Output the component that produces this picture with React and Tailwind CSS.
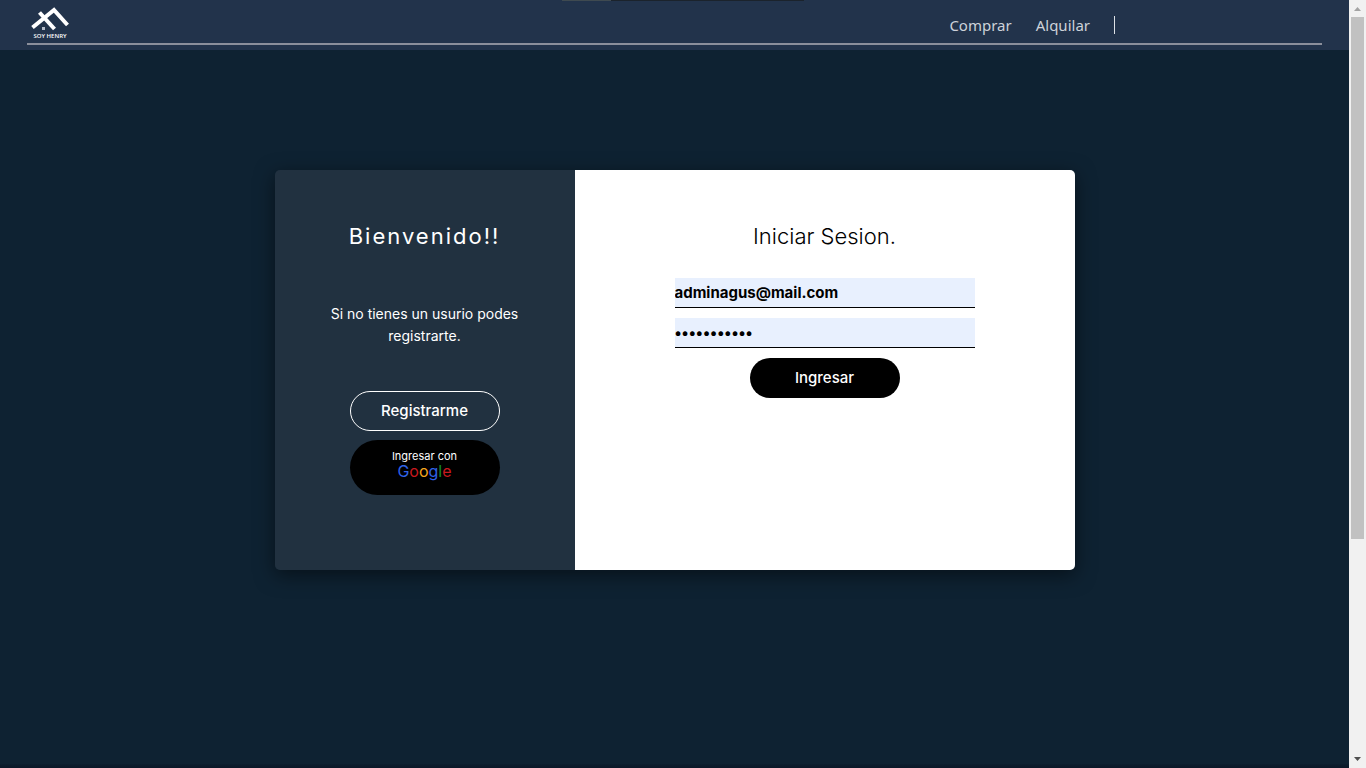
import React from "react";

function Logo() {
  return (
    <svg className="h-9 w-10" viewBox="0 0 40 36" role="img" aria-label="Soy Henry">
      <g fill="none" stroke="#fff" strokeWidth="4">
        <path d="M2.5 23.5 L24 6 L37.5 21" />
        <path d="M9.5 8.5 L24.5 25" />
      </g>
      <rect x="12" y="23" width="3" height="3" fill="#b4bcc9" />
      <text x="20" y="34" textAnchor="middle" fill="#fff" fontFamily="Open Sans, sans-serif" fontSize="6" fontWeight="600">
        SOY HENRY
      </text>
    </svg>
  );
}

function Header() {
  return (
    <header className="relative bg-[#22334b] px-[27px] pb-[5px]">
      <div className="absolute top-0 left-[562px] flex h-px w-[242px] bg-[#1b232c]">
        <span className="w-[49px] bg-[#3f4a50]" />
      </div>
      <div className="flex h-[45px] justify-between border-b-2 border-[#8b8f9b]">
        <a href="#inicio" className="ml-[3px] pt-1">
          <Logo />
        </a>
        <nav className="mr-[207px] flex items-center gap-6 pt-[7px] font-['Noto_Sans','Open_Sans',sans-serif] text-[15px] leading-6 text-[#cdd2d9]">
          <a href="#comprar">Comprar</a>
          <a href="#alquilar">Alquilar</a>
          <span className="h-[18px] w-px bg-[#dde1e6]" />
        </nav>
      </div>
    </header>
  );
}

function WelcomePanel() {
  return (
    <section className="flex w-[300px] shrink-0 flex-col items-center bg-[#213140] px-[45px] pt-[50px] text-center text-white">
      <h2 className="text-[22px] leading-[33px] tracking-[2px]">Bienvenido!!</h2>
      <p className="mt-[50px] text-[14px] leading-[22px]">Si no tienes un usurio podes registrarte.</p>
      <button type="button" className="mt-[44px] h-10 w-[150px] rounded-full border border-white text-[15px] font-medium">
        Registrarme
      </button>
      <button type="button" className="mt-[9px] flex h-[55px] w-[150px] flex-col items-center rounded-full bg-black pt-[9px]">
        <span className="text-[11px] leading-[14px]">Ingresar con</span>
        <span className="text-[16px] leading-4">
          <span className="text-[#2f62e8]">G</span>
          <span className="text-[#c8191e]">o</span>
          <span className="text-[#f5a61d]">o</span>
          <span className="text-[#2f62e8]">g</span>
          <span className="text-[#158a2b]">l</span>
          <span className="text-[#c8191e]">e</span>
        </span>
      </button>
    </section>
  );
}

function LoginForm() {
  const field =
    "h-[30px] w-full border-b border-black bg-[#e8f0fe] text-[15px] font-bold text-black outline-none";
  return (
    <form className="flex grow flex-col items-center bg-white pt-[50px]" onSubmit={(e) => e.preventDefault()}>
      <h1 className="text-[22px] leading-[33px] font-light text-black">Iniciar Sesion.</h1>
      <div className="mt-[25px] flex w-[300px] flex-col items-center gap-[10px]">
        <input type="email" aria-label="Email" defaultValue="adminagus@mail.com" className={field} />
        <input type="password" aria-label="Contraseña" defaultValue="adminagus12" className={field} />
        <button type="submit" className="h-10 w-[150px] rounded-full bg-black text-[15px] font-medium text-white">
          Ingresar
        </button>
      </div>
    </form>
  );
}

function ScrollBar() {
  return (
    <div className="flex w-[17px] shrink-0 flex-col items-center bg-[#f1f1f1]" aria-hidden="true">
      <svg className="h-[17px] w-[17px]" viewBox="0 0 17 17">
        <path d="M5 11 L8.5 7 L12 11 Z" fill="#a3a3a3" />
      </svg>
      <div className="h-[522px] w-[13px] bg-[#c1c1c1]" />
      <svg className="mt-auto h-[17px] w-[17px]" viewBox="0 0 17 17">
        <path d="M5 6 L12 6 L8.5 10 Z" fill="#505050" />
      </svg>
    </div>
  );
}

export default function App() {
  return (
    <div className="flex min-h-screen bg-[#0e2232] font-['Inter','Open_Sans',sans-serif]">
      <div className="flex grow flex-col">
        <Header />
        <main className="flex grow justify-center pt-[120px]">
          <div className="flex h-[400px] w-full max-w-[800px] overflow-hidden rounded-[5px] shadow-[0_5px_20px_rgba(0,0,0,0.5)]">
            <WelcomePanel />
            <LoginForm />
          </div>
        </main>
        <div className="h-1 bg-linear-to-b from-[#0d1f2f] to-[#0b1828]" />
      </div>
      <ScrollBar />
    </div>
  );
}
